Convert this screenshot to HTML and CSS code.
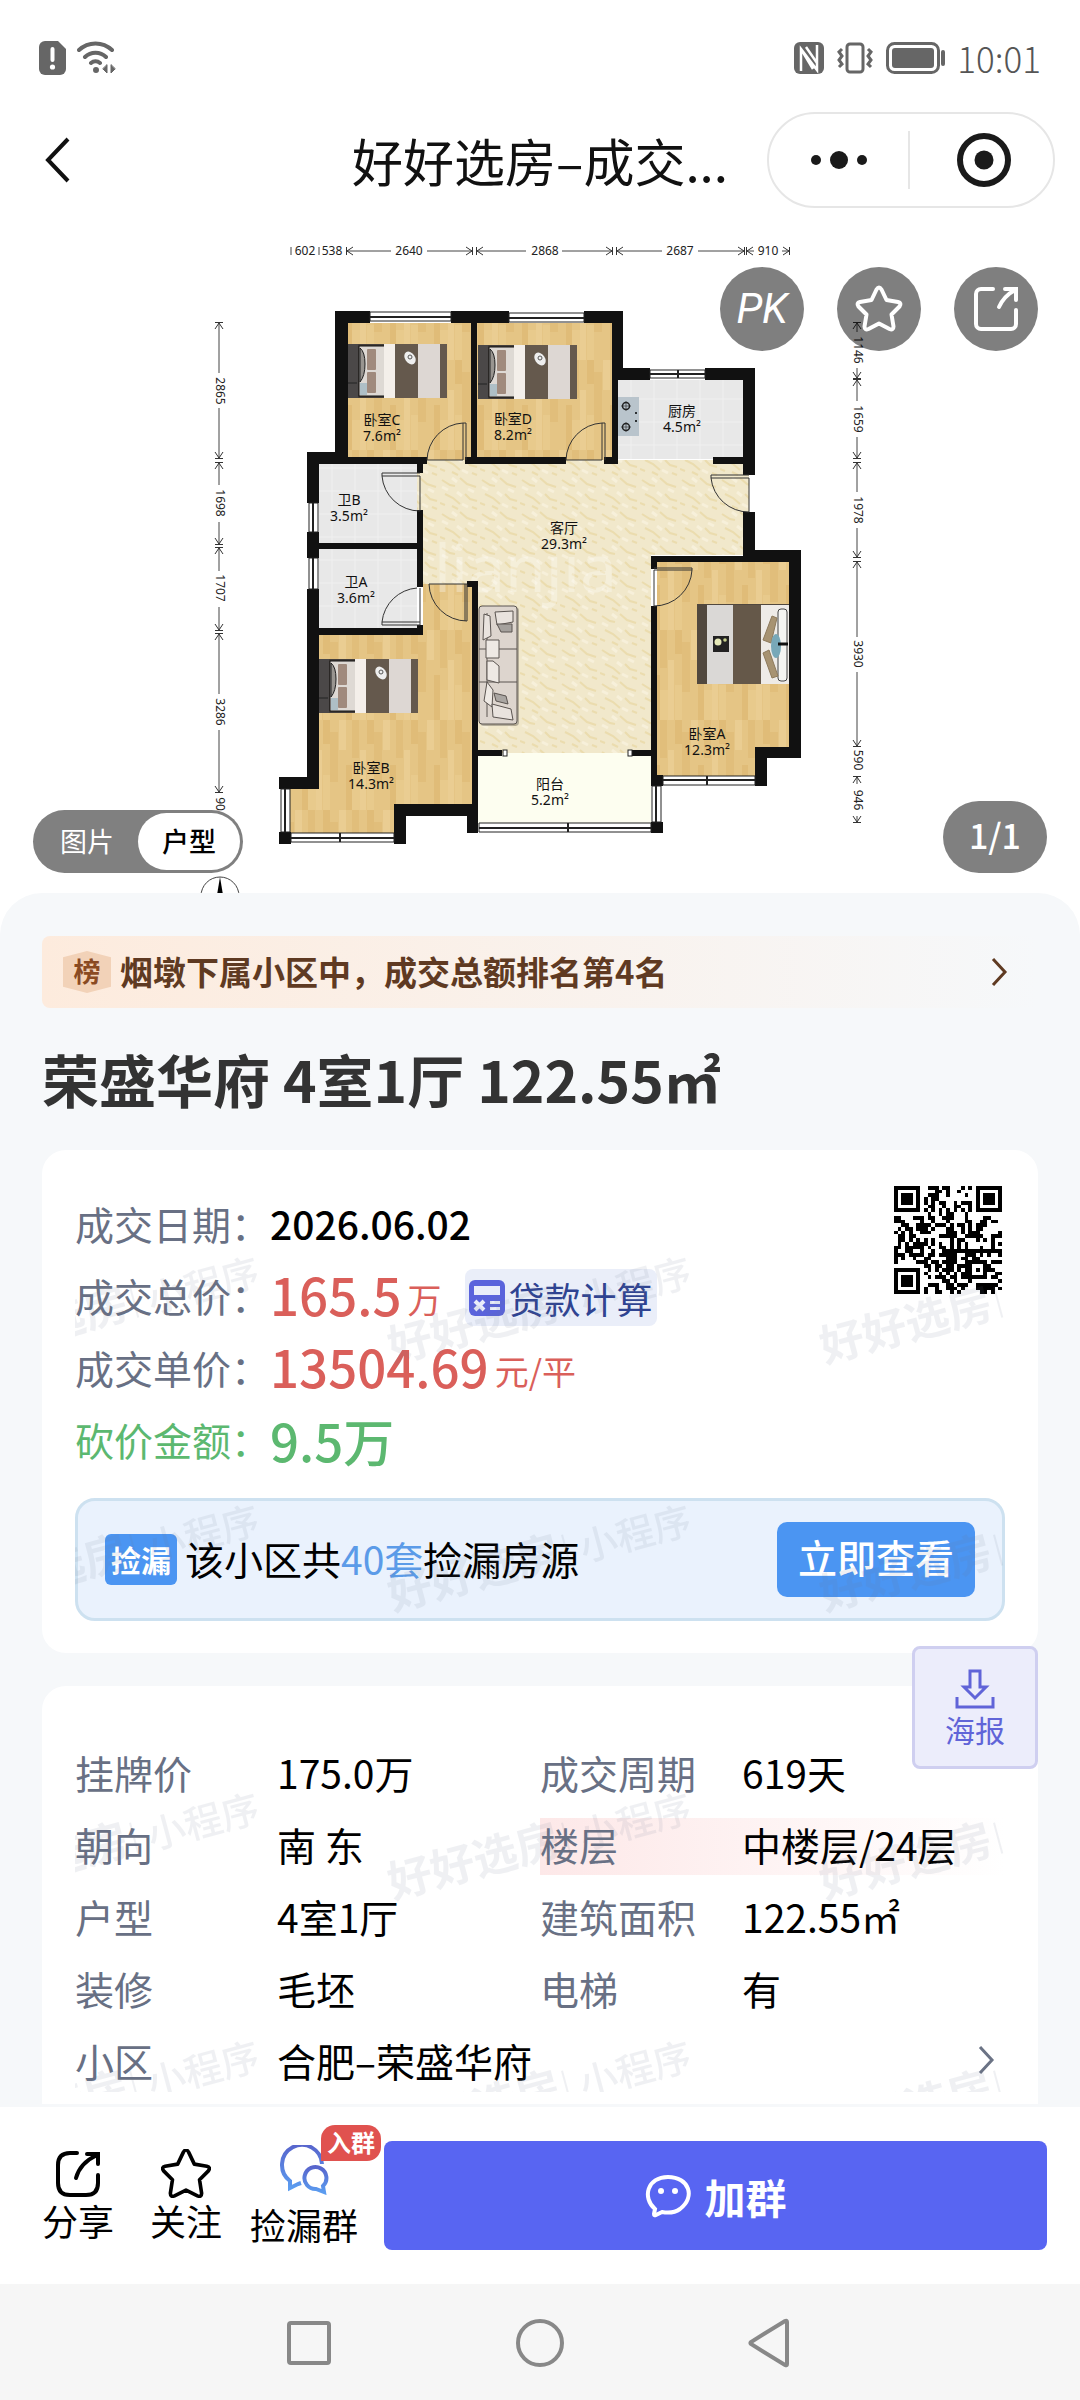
FILE: index.html
```html
<!DOCTYPE html>
<html lang="zh-CN">
<head>
<meta charset="utf-8">
<meta name="viewport" content="width=device-width, initial-scale=1">
<title>好好选房-成交详情</title>
<link rel="stylesheet" href="styles.css">
</head>
<body>
<div class="page">
  <div class="status">
    <div class="status-side">
      <svg width="27" height="34" viewBox="0 0 27 34"><path d="M6 0h13l8 8v20a6 6 0 0 1-6 6H6a6 6 0 0 1-6-6V6a6 6 0 0 1 6-6z" fill="#666"/><path d="M13.500 8v11" stroke="#fff" stroke-width="4" stroke-linecap="round"/><circle cx="13.500" cy="26" r="2.600" fill="#fff"/></svg>
      <svg width="40" height="34" viewBox="0 0 40 34" fill="none" stroke="#666" stroke-width="4" stroke-linecap="round"><path d="M2 9a24 24 0 0 1 33 0M8 16a15 15 0 0 1 21 0M14 22a7 7 0 0 1 9 0"/><circle cx="19" cy="29" r="2" fill="#666" stroke-width="2"/><path d="M30 24v8l-4-4zM34 24v8l4-4z" fill="#666" stroke-width="1"/></svg>
    </div>
    <div class="status-side">
      <svg width="30" height="32" viewBox="0 0 30 32"><rect width="30" height="32" rx="6" fill="#666"/><path d="M7 29V7l16 21V3M7 7l12 20M12 5l11 16" stroke="#fff" stroke-width="2.500" fill="none"/></svg>
      <svg width="40" height="32" viewBox="0 0 40 32" fill="none" stroke="#666" stroke-width="3"><rect x="12" y="2" width="16" height="28" rx="3"/><path d="M7 7l-3 3 3 4-3 4 3 4-3 3M33 7l3 3-3 4 3 4-3 4 3 3"/></svg>
      <svg width="60" height="32" viewBox="0 0 60 32"><rect x="1.500" y="1.500" width="51" height="29" rx="7" fill="none" stroke="#666" stroke-width="3"/><rect x="6" y="6" width="42" height="20" rx="3" fill="#666"/><path d="M57 10v12" stroke="#666" stroke-width="4" stroke-linecap="round"/></svg>
      <time>10:01</time>
    </div>
  </div>

  <header class="nav">
    <button class="back" aria-label="返回"><svg width="28" height="48" viewBox="0 0 28 48"><path d="M24 3L4 24l20 21" fill="none" stroke="#111" stroke-width="4"/></svg></button>
    <div class="nav-title">好好选房–成交...</div>
    <div class="capsule">
      <button aria-label="更多"><svg width="56" height="20" viewBox="0 0 56 20" fill="#1a1a1a"><circle cx="5" cy="10" r="5"/><circle cx="28" cy="10" r="9"/><circle cx="51" cy="10" r="5"/></svg></button>
      <button aria-label="关闭"><svg width="54" height="54" viewBox="0 0 54 54"><circle cx="27" cy="27" r="24" fill="none" stroke="#1a1a1a" stroke-width="6"/><circle cx="27" cy="27" r="9.500" fill="#1a1a1a"/></svg></button>
    </div>
  </header>

  <main>
    <section class="gallery">
      <svg class="plan" viewBox="0 208 1080 685" role="img" aria-label="户型图">
        <defs>
          <pattern id="wood" width="44" height="90" patternUnits="userSpaceOnUse">
            <rect width="44" height="90" fill="#e5c585"/>
            <path d="M0 0h7v38H0zM22 12h8v50h-8z" fill="#e1be7b"/>
            <path d="M8 30h6v60H8zM31 0h7v30h-7z" fill="#eacd92"/>
            <path d="M15 0h7v24h-7zM38 45h6v45h-6z" fill="#e0bc78"/>
            <path d="M15 55h7v35h-7zM0 60h8v30H0z" fill="#e8ca8c"/>
          </pattern>
          <pattern id="marble" width="40" height="34" patternUnits="userSpaceOnUse">
            <rect width="40" height="34" fill="#f1e8cb"/>
            <path d="M2 4l8 5 5 1M20 2l7 6 9 3M5 18l8 4 7 6M25 18l5 5 7 2M12 30l6 3M32 31l5 2M0 27l5 2" fill="none" stroke="#ebdcae" stroke-width="2"/>
            <path d="M12 2l5 4M28 13l6 3M17 16l5 4M2 11l6 3M22 28l6 3" stroke="#f7f0da" stroke-width="3"/>
          </pattern>
          <pattern id="tile" width="23" height="23" patternUnits="userSpaceOnUse">
            <rect width="23" height="23" fill="#e8e8e8"/><path d="M0 8h23M10 0v23" stroke="#f0f0f0"/>
          </pattern>
          <marker id="arr" viewBox="0 0 8 10" refX="7" refY="5" markerWidth="8" markerHeight="10" markerUnits="userSpaceOnUse" orient="auto-start-reverse"><path d="M1 1l6 4-6 4M7.500 1v8" fill="none" stroke="#333" stroke-width="1"/></marker>
          <symbol id="bed" viewBox="0 0 99 54">
            <rect width="99" height="54" fill="#453f3b"/>
            <path d="M0 0h10v54H0z" fill="#4b4848"/><path d="M0 39h9" stroke="#222"/>
            <rect x="11" y="2" width="26" height="50" fill="#ded9d4" stroke="#111"/>
            <rect x="12" y="39" width="7" height="12" fill="#aebfc6"/>
            <rect x="19" y="5" width="9" height="21" rx="1" fill="#a08a7d"/><rect x="19" y="28" width="9" height="21" rx="1" fill="#a08a7d"/>
            <path d="M12 4q5 4 5 16t-5 18z" fill="#999590" stroke="#222"/>
            <rect x="36" width="11" height="54" fill="#f4efea"/><rect x="47" width="23" height="54" fill="#65594d"/>
            <rect x="70" width="22" height="54" fill="#ddd7d3"/><rect x="92" width="7" height="54" fill="#65594d"/>
            <ellipse cx="62" cy="14" rx="5" ry="7" fill="#eee" transform="rotate(-35 62 14)"/><circle cx="62" cy="13" r="2" fill="none" stroke="#555"/>
          </symbol>
        </defs>

        <!-- floors -->
        <path d="M348 323h123v137H348zM477 323h135v137H477zM319 632h104v-48h49v220h-78v32H288v-50h31zM657 560h132v187h-32v30H657z" fill="url(#wood)"/>
        <path d="M319 464h98v79h-98zM319 549h98v79h-98zM618 380h125v79H618z" fill="url(#tile)"/>
        <path d="M423 460h326v95h-98v198H478V584h-61V464z" fill="url(#marble)"/>
        <path d="M478 753h173v72H478z" fill="#fdfef0"/>
        <text class="plan-mark" x="434" y="592">lianjia</text>

        <!-- walls -->
        <g fill="#111">
          <path d="M335 311h35v12h-22v134h79v7H319v39h-12v-51h28zM451 311h58v12h-32v134h89v7H465v-7h6V323h-20zM584 311h39v57h27v12h-32v84h-14v-7h8V323h-28zM705 368h50v107h-12v-11h-30v-7h30v-77h-38zM743 512h12v38h46v208h-34v28h-12v-39h34V562H657v7h-6v-13h92z"/>
          <path d="M651 606h6v169h6v11h-12v-30h-19v-6h19zM651 822h12v11h-12zM307 532h12v11h98v-33h6v77h-6v-38h-98v9h-12zM307 589h12v39h98v-3h6v10H319v154h-40v-12h28zM417 457h6v16h-6zM279 832h12v12h-12zM467 581h11v169h24v6h-24v77h-11v-17h-61v28h-12v-40h78V587h-5z"/>
        </g>
        <!-- windows -->
        <g fill="#fff" stroke="#222" stroke-width="1">
          <path d="M370 312h81v9h-81zM509 313h75v9h-75zM650 370h55v8h-55zM309 503h9v29h-9zM309 558h9v31h-9zM281 789h9v43h-9zM291 833h103v9H291zM479 823h172v9H479zM663 776h92v9h-92zM652 786h9v36h-9z"/>
          <path d="M370 317h81M509 318h75M650 374h55M313 503v29M313 558v31M285 789v43M291 838h103M479 828h172M663 780h92M656 786v36" stroke-width="2"/>
          <path d="M340 833v9M568 823v9M707 776v9M678 370v8" stroke-width="2"/>
          <rect x="503" y="750" width="4" height="6"/><rect x="628" y="750" width="4" height="6"/>
        </g>
        <!-- doors -->
        <path d="M427 460a38 38 0 0 1 36-37v37zM463 423h3v37M566 460a38 38 0 0 1 36-37v37zM602 423h3v37M420 476h-38a38 38 0 0 0 38 35zM382 476v-3h38M420 622h-38a38 38 0 0 1 35-34M420 588v37h-38v-3M429 584h38v37a38 38 0 0 1-38-37zM465 584v37M749 478h-38a38 38 0 0 0 38 34zM711 478v-3h38M654 606v-36h38a38 38 0 0 1-38 36M654 568h38v2" fill="none" stroke="#333" stroke-width="1"/>

        <!-- furniture -->
        <use href="#bed" x="348" y="344" width="99" height="54"/>
        <use href="#bed" x="478" y="345" width="99" height="54"/>
        <use href="#bed" x="319" y="659" width="99" height="54"/>
        <g>
          <rect x="697" y="604" width="92" height="80" fill="#51483e"/><rect x="707" y="605" width="26" height="79" fill="#dad8d6"/><rect x="733" y="605" width="28" height="79" fill="#655849"/>
          <rect x="761" y="605" width="28" height="79" fill="#eeebe7"/><rect x="778" y="609" width="9" height="72" rx="3" fill="#f5f5f2" stroke="#444"/>
          <path d="M763 640l9-24 5 2-6 25zM763 653l6-3 9 26-6 2z" fill="#a79372" stroke="#8d7a5c"/><ellipse cx="776" cy="646" rx="5" ry="12" fill="#78a8b8"/>
          <path d="M778 644h10" stroke="#111" stroke-width="3"/>
          <rect x="713" y="636" width="16" height="16" fill="#222"/><circle cx="718" cy="642" r="3.500" fill="#e6e9b8"/><circle cx="725" cy="640" r="1.800" fill="#c9d28e"/>
        </g>
        <g stroke="#5a5450" stroke-width="1">
          <rect x="480" y="607" width="39" height="119" rx="4" fill="#77716a" opacity=".5" stroke="none"/>
          <rect x="479" y="606" width="38" height="118" rx="3" fill="#ddd5ce"/>
          <path d="M479 649h38M479 682h38M487 613v104" fill="none"/>
          <path d="M484 614l6 2 1 20-8 4zM495 612l18-1v11l-16 3z" fill="#e9e3de"/><path d="M497 624h15v8h-11z" fill="#a5a19d"/>
          <path d="M486 640h13v18h-13zM487 661h6l6 5v17l-12-3zM487 682l6 8-1 17-8-6z" fill="#eee9e4"/><path d="M494 693l12 3 2 8-12-3z" fill="#aaa6a2"/><path d="M492 704l19 5 2 11-20-3z" fill="#e9e3de"/>
        </g>
        <g>
          <rect x="618" y="397" width="21" height="39" fill="#b9c4cc"/><g fill="none" stroke="#222" stroke-width="1.500"><circle cx="626" cy="406" r="3.500"/><circle cx="626" cy="427" r="3.500"/></g><path d="M621 406h10M626 401v10M621 427h10M626 422v10" stroke="#222" stroke-width=".6"/><circle cx="636" cy="413" r="1"/><circle cx="636" cy="421" r="1"/>
        </g>

        <g class="room">
          <text x="382" y="425">卧室C</text><text x="382" y="441">7.6m²</text>
          <text x="513" y="424">卧室D</text><text x="513" y="440">8.2m²</text>
          <text x="349" y="505">卫B</text><text x="349" y="521">3.5m²</text>
          <text x="356" y="587">卫A</text><text x="356" y="603">3.6m²</text>
          <text x="564" y="533">客厅</text><text x="564" y="549">29.3m²</text>
          <text x="682" y="416">厨房</text><text x="682" y="432">4.5m²</text>
          <text x="371" y="773">卧室B</text><text x="371" y="789">14.3m²</text>
          <text x="550" y="789">阳台</text><text x="550" y="805">5.2m²</text>
          <text x="707" y="739">卧室A</text><text x="707" y="755">12.3m²</text>
        </g>

        <!-- dimensions -->
        <g class="dim">
          <text x="305" y="255">602</text><text x="332" y="255">538</text><text x="409" y="255">2640</text><text x="545" y="255">2868</text><text x="680" y="255">2687</text><text x="768" y="255">910</text>
          <text transform="translate(216 391) rotate(90)">2865</text><text transform="translate(216 503) rotate(90)">1698</text><text transform="translate(216 588) rotate(90)">1707</text><text transform="translate(216 712) rotate(90)">3286</text><text transform="translate(216 804) rotate(90)">90</text>
          <text transform="translate(854 350) rotate(90)">1146</text><text transform="translate(854 419) rotate(90)">1659</text><text transform="translate(854 510) rotate(90)">1978</text><text transform="translate(854 654) rotate(90)">3930</text><text transform="translate(854 760) rotate(90)">590</text><text transform="translate(854 800) rotate(90)">946</text>
        </g>
        <g fill="none" stroke="#444" stroke-width="1">
          <path d="M291 247v8M319 247v8"/>
          <g marker-start="url(#arr)"><path d="M347 251h44"/><path d="M477 251h49"/><path d="M617 251h45"/><path d="M747 251h7"/><path d="M219 323v50"/><path d="M219 463v22"/><path d="M219 548v23"/><path d="M219 634v60"/><path d="M857 323v9"/><path d="M857 380v21"/><path d="M857 463v29"/><path d="M857 562v75"/><path d="M857 777v7"/></g>
          <g marker-end="url(#arr)"><path d="M427 251h45"/><path d="M562 251h50"/><path d="M698 251h46"/><path d="M782 251h7"/><path d="M219 408v50"/><path d="M219 522v22"/><path d="M219 607v23"/><path d="M219 730v62"/><path d="M857 368v10"/><path d="M857 437v21"/><path d="M857 528v29"/><path d="M857 672v74"/><path d="M857 816v6"/></g>
          <circle cx="220" cy="896" r="19"/>
        </g>
        <path d="M220 877l4 24h-8z" fill="#000"/>
      </svg>

      <div class="round-tools">
        <button class="pk">PK</button>
        <button aria-label="收藏"><svg width="48" height="48" viewBox="0 0 48 48"><path d="M21.500 4.500q2.500-4 5 0l5 10.500 11.500 2q4 1 1.500 4.500l-8 8 2 12q0 4-4 2.500L24 38.500 13.500 44q-4 1.500-4-2.500l2-12-8-8Q1 18 5 17l11.500-2z" fill="none" stroke="#fff" stroke-width="4" stroke-linejoin="round"/></svg></button>
        <button aria-label="分享"><svg width="46" height="46" viewBox="0 0 46 46" fill="none" stroke="#fff" stroke-width="4" stroke-linecap="round"><path d="M20 3H8a5 5 0 0 0-5 5v30a5 5 0 0 0 5 5h30a5 5 0 0 0 5-5V24M32 3h11v11M42 4Q31 10 26 21"/></svg></button>
      </div>
      <div class="switch"><button>图片</button><button class="on">户型</button></div>
      <div class="count">1/1</div>
    </section>

    <section class="panel">
      <a class="rank" href="#rank">
        <span class="rank-badge">榜</span>
        <span class="rank-text">烟墩下属小区中，成交总额排名第4名</span>
        <svg width="18" height="30" viewBox="0 0 18 30"><path d="M3 2l12 13L3 28" fill="none" stroke="#5f3a22" stroke-width="3"/></svg>
      </a>
      <h1>荣盛华府 4室1厅 122.55㎡</h1>

      <section class="card">
        <div class="summary">
          <dl class="prices">
            <div><dt>成交日期：</dt><dd class="date">2026.06.02</dd></div>
            <div><dt>成交总价：</dt><dd class="price">165.5<small>万</small></dd>
              <dd><button class="loan"><svg width="36" height="36" viewBox="0 0 36 36"><rect width="36" height="36" rx="6" fill="#5a63dc"/><path d="M5 6h26v9H5zM21 21h10v3H21zM21 27h10v3H21z" fill="#e9edfa"/><path d="M6 21l9 9M15 21l-9 9" stroke="#e9edfa" stroke-width="4"/></svg>贷款计算</button></dd></div>
            <div><dt>成交单价：</dt><dd class="price">13504.69<small>元/平</small></dd></div>
            <div class="cut"><dt>砍价金额：</dt><dd class="price">9.5万</dd></div>
          </dl>
          <svg class="qr" viewBox="0 0 29 29" role="img" aria-label="小程序码" shape-rendering="crispEdges"><path stroke="#000" stroke-width="1" fill="none" d="M0 .5h7M9 .5h3M13 .5h2M18 .5h1M20 .5h1M22 .5h7M0 1.500h1M6 1.500h1M11 1.500h2M14 1.500h1M17 1.500h1M22 1.500h1M28 1.500h1M0 2.500h1M2 2.500h3M6 2.500h1M9 2.500h3M14 2.500h1M19 2.500h1M22 2.500h1M24 2.500h3M28 2.500h1M0 3.500h1M2 3.500h3M6 3.500h1M8 3.500h1M10 3.500h2M22 3.500h1M24 3.500h3M28 3.500h1M0 4.500h1M2 4.500h3M6 4.500h1M8 4.500h1M10 4.500h1M12 4.500h2M16 4.500h1M18 4.500h3M22 4.500h1M24 4.500h3M28 4.500h1M0 5.500h1M6 5.500h1M9 5.500h2M13 5.500h1M16 5.500h2M20 5.500h1M22 5.500h1M28 5.500h1M0 6.500h7M8 6.500h1M10 6.500h1M12 6.500h1M14 6.500h1M16 6.500h1M18 6.500h1M20 6.500h1M22 6.500h7M9 7.500h1M12 7.500h1M14 7.500h2M19 7.500h1M0 8.500h2M5 8.500h3M9 8.500h2M13 8.500h3M19 8.500h1M24 8.500h2M0 9.500h3M7 9.500h1M10 9.500h1M14 9.500h1M19 9.500h2M23 9.500h2M26 9.500h2M2 10.500h2M6 10.500h4M11 10.500h3M15 10.500h1M17 10.500h2M20 10.500h1M22 10.500h3M1 11.500h1M3 11.500h2M6 11.500h3M10 11.500h1M14 11.500h2M18 11.500h1M20 11.500h1M22 11.500h2M0 12.500h1M2 12.500h1M4 12.500h1M7 12.500h3M14 12.500h3M18 12.500h1M20 12.500h3M28 12.500h1M1 13.500h2M4 13.500h2M12 13.500h5M19 13.500h5M26 13.500h3M1 14.500h2M4 14.500h1M6 14.500h1M8 14.500h1M10 14.500h1M15 14.500h1M17 14.500h2M22 14.500h1M24 14.500h1M26 14.500h1M1 15.500h1M3 15.500h1M5 15.500h4M10 15.500h1M12 15.500h1M15 15.500h1M17 15.500h1M19 15.500h1M26 15.500h1M28 15.500h1M0 16.500h2M3 16.500h5M9 16.500h1M12 16.500h2M15 16.500h1M17 16.500h1M19 16.500h1M23 16.500h1M26 16.500h1M0 17.500h1M3 17.500h2M7 17.500h1M10 17.500h1M13 17.500h16M0 18.500h3M4 18.500h4M9 18.500h2M12 18.500h5M19 18.500h3M23 18.500h1M25 18.500h1M28 18.500h1M0 19.500h1M2 19.500h1M5 19.500h1M8 19.500h2M14 19.500h3M18 19.500h2M21 19.500h2M0 20.500h1M6 20.500h3M10 20.500h2M13 20.500h4M19 20.500h6M26 20.500h3M8 21.500h2M11 21.500h2M14 21.500h2M17 21.500h4M24 21.500h2M0 22.500h7M9 22.500h1M11 22.500h1M13 22.500h3M17 22.500h1M19 22.500h2M22 22.500h1M24 22.500h3M0 23.500h1M6 23.500h1M8 23.500h1M12 23.500h1M14 23.500h1M16 23.500h1M18 23.500h3M24 23.500h1M27 23.500h2M0 24.500h1M2 24.500h3M6 24.500h1M9 24.500h1M11 24.500h3M15 24.500h2M18 24.500h7M26 24.500h2M0 25.500h1M2 25.500h3M6 25.500h1M13 25.500h2M16 25.500h1M20 25.500h1M28 25.500h1M0 26.500h1M2 26.500h3M6 26.500h1M9 26.500h3M14 26.500h2M17 26.500h3M22 26.500h6M0 27.500h1M6 27.500h1M8 27.500h1M11 27.500h1M14 27.500h3M18 27.500h1M22 27.500h5M28 27.500h1M0 28.500h7M8 28.500h1M11 28.500h2M15 28.500h1M17 28.500h1M23 28.500h2M26 28.500h1"/></svg>
        </div>
        <div class="promo">
          <span class="tag">捡漏</span>
          <p>该小区共<b>40套</b>捡漏房源</p>
          <button>立即查看</button>
        </div>
        <div class="mark" aria-hidden="true"><svg width="100%" height="100%">
          <defs><pattern id="wm" width="432" height="248" patternUnits="userSpaceOnUse">
            <g id="wm-line" transform="translate(318 180) rotate(-15)"><text class="wm-name" x="0" y="0">好好选房</text><path d="M183-30V2" stroke="#6c7890" stroke-width="2"/><text class="wm-kind" x="197" y="2">小程序</text></g>
            <use href="#wm-line" x="-432"/>
          </pattern></defs>
          <rect width="100%" height="100%" fill="url(#wm)"/></svg></div>
      </section>

      <section class="card details">
        <dl class="facts">
          <div><dt>挂牌价</dt><dd>175.0万</dd></div>
          <div><dt>成交周期</dt><dd>619天</dd></div>
          <div><dt>朝向</dt><dd>南 东</dd></div>
          <div class="hot"><dt>楼层</dt><dd>中楼层/24层</dd></div>
          <div><dt>户型</dt><dd>4室1厅</dd></div>
          <div><dt>建筑面积</dt><dd>122.55㎡</dd></div>
          <div><dt>装修</dt><dd>毛坯</dd></div>
          <div><dt>电梯</dt><dd>有</dd></div>
          <div class="wide"><dt>小区</dt><dd><a href="#community">合肥–荣盛华府<svg width="18" height="30" viewBox="0 0 18 30"><path d="M3 2l12 13L3 28" fill="none" stroke="#6b7385" stroke-width="3"/></svg></a></dd></div>
        </dl>
        <div class="mark" aria-hidden="true"><svg width="100%" height="100%"><rect width="100%" height="100%" fill="url(#wm)"/></svg></div>
        <button class="poster"><svg width="40" height="40" viewBox="0 0 40 40" fill="none" stroke="#6064d8" stroke-width="3"><path d="M2 28v10h36V28M15 2h10v16h6L20 29 9 18h6z"/></svg>海报</button>
      </section>
    </section>
  </main>

  <footer class="actions">
    <button class="act"><svg width="50" height="50" viewBox="0 0 50 50" fill="none" stroke="#000" stroke-width="4" stroke-linecap="round"><path d="M24 4H17Q5 4 5 16v18q0 12 12 12h16q12 0 12-12v-8M34 5h11v10M44 6Q27 14 23 29"/></svg>分享</button>
    <button class="act"><svg width="50" height="50" viewBox="0 0 48 48"><path d="M21.500 3q2.500-4 5 0l5.500 11.500 12 2q4 1 1.500 4.500l-8.500 8.500 2 13q0 4-4 2.500L24 39.500 13 45q-4 1.500-4-2.500l2-13L2.500 21Q0 17.500 4 16.500l12-2z" fill="none" stroke="#000" stroke-width="3.500" stroke-linejoin="round"/></svg>关注</button>
    <button class="act group"><span class="new">入群</span><svg width="50" height="50" viewBox="0 0 50 50" fill="none" stroke="url(#chat)" stroke-width="4"><defs><linearGradient id="chat" x2="0" y2="1"><stop stop-color="#5865cc"/><stop offset="1" stop-color="#5b9cf0"/></linearGradient></defs><path d="M43 19A20 20 0 1 0 11 36v7l8-4 3-1"/><path d="M44 41a11 11 0 1 0-7 3l8 3z"/></svg>捡漏群</button>
    <button class="join"><svg width="46" height="44" viewBox="0 0 46 44" fill="none" stroke="#fff" stroke-width="4"><path d="M10 35C-3 24 2 3 23 3s28 20 12 32q-7 5-18 3l-6 3q-2 1-2-1z"/><circle cx="16" cy="17" r="3" fill="#fff" stroke="none"/><circle cx="30" cy="17" r="3" fill="#fff" stroke="none"/></svg>加群</button>
  </footer>
  <nav class="system">
    <button aria-label="最近任务"><svg width="48" height="50" viewBox="0 0 48 50"><rect x="4" y="5" width="40" height="40" rx="2"/></svg></button>
    <button aria-label="主页"><svg width="48" height="50" viewBox="0 0 48 50"><circle cx="24" cy="25" r="22"/></svg></button>
    <button aria-label="返回"><svg width="48" height="50" viewBox="0 0 48 50"><path d="M40 4v42q0 2-2 1L4 26q-1-1 0-2L38 3q2-1 2 1z"/></svg></button>
  </nav>
</div>
</body>
</html>
```
FILE: styles.css
```css
* { box-sizing: border-box; margin: 0; padding: 0; }
body {
  font-family: "Noto Sans CJK SC", "Noto Sans", sans-serif;
  color: #111;
  background: #fff;
}
button { font: inherit; color: inherit; background: none; border: 0; cursor: pointer; }
a { color: inherit; text-decoration: none; }
svg { display: block; flex: none; }

.page { display: flex; flex-direction: column; min-height: 100vh; }
main { flex: 1; display: flex; flex-direction: column; }

.status {
  display: flex;
  justify-content: space-between;
  align-items: center;
  height: 112px;
  padding: 4px 39px 0;
}
.status-side { display: flex; align-items: center; gap: 11px; }
time { font-size: 35px; line-height: 40px; font-weight: 300; color: #555; }

.nav {
  position: relative;
  display: flex;
  justify-content: space-between;
  align-items: center;
  height: 96px;
  padding: 0 25px 0 44px;
}
.nav-title {
  position: absolute;
  left: 0;
  right: 0;
  text-align: center;
  font-size: 51px;
  line-height: 72px;
  pointer-events: none;
}
.capsule {
  display: flex;
  align-items: center;
  height: 96px;
  width: 288px;
  border: 2px solid #e6e6e6;
  border-radius: 48px;
}
.capsule button { flex: 1; display: flex; justify-content: center; align-items: center; height: 58px; }
.capsule button + button { padding-left: 4px; border-left: 2px solid #e6e6e6; }

.gallery { position: relative; }
.plan { width: 100%; height: auto; }
.room { font-size: 14px; text-anchor: middle; fill: #111; font-family: "Noto Sans", "Noto Sans CJK SC", sans-serif; }
.dim { font-size: 12px; text-anchor: middle; fill: #222; font-family: "Noto Sans", sans-serif; }
.plan-mark { font: 400 66px "Noto Sans", sans-serif; fill: #fff; opacity: .3; }

.round-tools { position: absolute; top: 59px; right: 42px; display: flex; gap: 33px; }
.round-tools button {
  display: flex;
  justify-content: center;
  align-items: center;
  width: 84px;
  height: 84px;
  border-radius: 50%;
  background: rgba(0, 0, 0, .5);
  color: #fff;
}
.round-tools .pk { font: italic 400 42px/84px Roboto, sans-serif; }

.switch {
  position: absolute;
  left: 33px;
  bottom: 20px;
  display: flex;
  width: 210px;
  height: 63px;
  padding: 3px;
  border-radius: 32px;
  background: #808080;
  color: #fff;
  font-size: 27px;
}
.switch button { flex: 1; padding-bottom: 2px; border-radius: 30px; }
.switch .on { background: #fff; color: #000; font-weight: 500; }
.count {
  position: absolute;
  right: 33px;
  bottom: 20px;
  width: 104px;
  height: 72px;
  border-radius: 36px;
  background: #808080;
  color: #fff;
  font-size: 34px;
  line-height: 68px;
  font-weight: 500;
  text-align: center;
}

.panel {
  flex: 1;
  padding: 43px 42px 3px;
  border-radius: 42px 42px 0 0;
  background: #f6f8fa;
}
.rank {
  display: flex;
  align-items: center;
  height: 72px;
  padding: 0 30px 0 21px;
  border-radius: 8px;
  background: linear-gradient(90deg, #fdebdd, #f6f8fa);
  color: #5f3a22;
}
.rank-badge {
  width: 48px;
  height: 42px;
  margin-right: 9px;
  background: #f2d2b8;
  clip-path: polygon(50% 0, 100% 15%, 100% 85%, 50% 100%, 0 85%, 0 15%);
  color: #8a4a22;
  font-size: 27px;
  line-height: 40px;
  font-weight: 700;
  text-align: center;
}
.rank-text { flex: 1; padding-bottom: 3px; font-size: 33px; line-height: 48px; font-weight: 700; }
h1 { margin: 34px 0 36px; font-size: 57px; line-height: 72px; font-weight: 700; color: #333; }

.card { position: relative; padding: 47px 33px 32px; border-radius: 24px; background: #fff; font-size: 39px; }
.summary { display: flex; justify-content: space-between; }
.prices { display: grid; gap: 15px; }
.prices > div { display: flex; align-items: center; height: 57px; }
dt { color: #687084; }
dt, .date, .facts dd { padding-bottom: 6px; }
.prices dt { width: 195px; white-space: nowrap; }
.date { font-weight: 500; color: #000; }
.price { padding-bottom: 3px; font-size: 51px; line-height: 57px; font-weight: 500; color: #da5f5a; }
.price small { margin-left: 6px; font-size: 34px; font-weight: 400; vertical-align: 3px; }
.cut dt, .cut .price { color: #5cb870; }
.loan {
  display: flex;
  align-items: center;
  gap: 3px;
  height: 57px;
  margin-left: 24px;
  padding: 0 4px;
  border-radius: 8px;
  background: #eaeef9;
  color: #2f4391;
  font-size: 36px;
}
.qr { width: 108px; height: 108px; margin: -11px 3px 0 0; }

.promo {
  display: flex;
  align-items: center;
  height: 123px;
  margin-top: 28px;
  padding: 0 27px;
  border: 3px solid #cde1f0;
  border-radius: 20px;
  background: #eaf2fd;
  color: #000;
}
.tag { margin-right: 8px; padding: 0 6px; border-radius: 6px; background: #4b95f2; color: #fff; font-size: 30px; line-height: 51px; font-weight: 700; }
.promo p { flex: 1; padding-bottom: 4px; }
.promo b { font-weight: 400; color: #5b9be8; }
.promo button { width: 198px; height: 75px; padding-bottom: 6px; border-radius: 10px; background: #4b95f2; color: #fff; font-weight: 500; line-height: 69px; }

.mark { position: absolute; inset: 33px 33px 32px; opacity: .1; pointer-events: none; }
.wm-name { font-size: 44px; font-weight: 700; fill: #6c7890; }
.wm-kind { font-size: 38px; font-weight: 500; fill: #6c7890; }

.details { margin-top: 33px; padding: 60px 33px 13px; border-radius: 24px 24px 0 0; }
.details .mark { bottom: 12px; }
.facts { display: grid; grid-template-columns: 1fr 1fr; gap: 15px 0; }
.facts > div { display: flex; align-items: center; height: 57px; }
.facts dt { width: 202px; }
.facts dd { flex: 1; color: #000; }
.facts .wide { grid-column: span 2; }
.facts a { display: flex; justify-content: space-between; align-items: center; padding-right: 10px; }
.hot { background: linear-gradient(90deg, #fde8e8, #fff); }
.poster {
  position: absolute;
  top: -40px;
  right: 0;
  display: flex;
  flex-direction: column;
  align-items: center;
  width: 126px;
  height: 123px;
  padding-top: 20px;
  border: 3px solid #cfcff0;
  border-radius: 8px;
  background: #ecedfb;
  color: #6064d8;
  font-size: 30px;
  line-height: 40px;
}

.actions { display: flex; align-items: flex-start; height: 177px; padding: 34px 33px 0 24px; background: #fff; }
.act { position: relative; display: flex; flex-direction: column; align-items: center; width: 108px; padding-top: 8px; font-size: 36px; line-height: 42px; color: #000; }
.group { width: 128px; margin-right: 16px; padding-top: 4px; }
.group > svg { margin-bottom: 8px; }
.new {
  position: absolute;
  top: -16px;
  right: -13px;
  width: 60px;
  height: 36px;
  border-radius: 14px 14px 14px 0;
  background: #e0524f;
  color: #fff;
  font-size: 24px;
  line-height: 34px;
  font-weight: 700;
}
.join {
  flex: 1;
  display: flex;
  justify-content: center;
  align-items: center;
  gap: 14px;
  height: 109px;
  border-radius: 8px;
  background: #5865f2;
  color: #fff;
  font-size: 41px;
  font-weight: 700;
}
.system { display: flex; justify-content: center; align-items: center; gap: 183px; height: 117px; background: #f6f6f6; }
.system svg { fill: none; stroke: #888; stroke-width: 4; }
```
